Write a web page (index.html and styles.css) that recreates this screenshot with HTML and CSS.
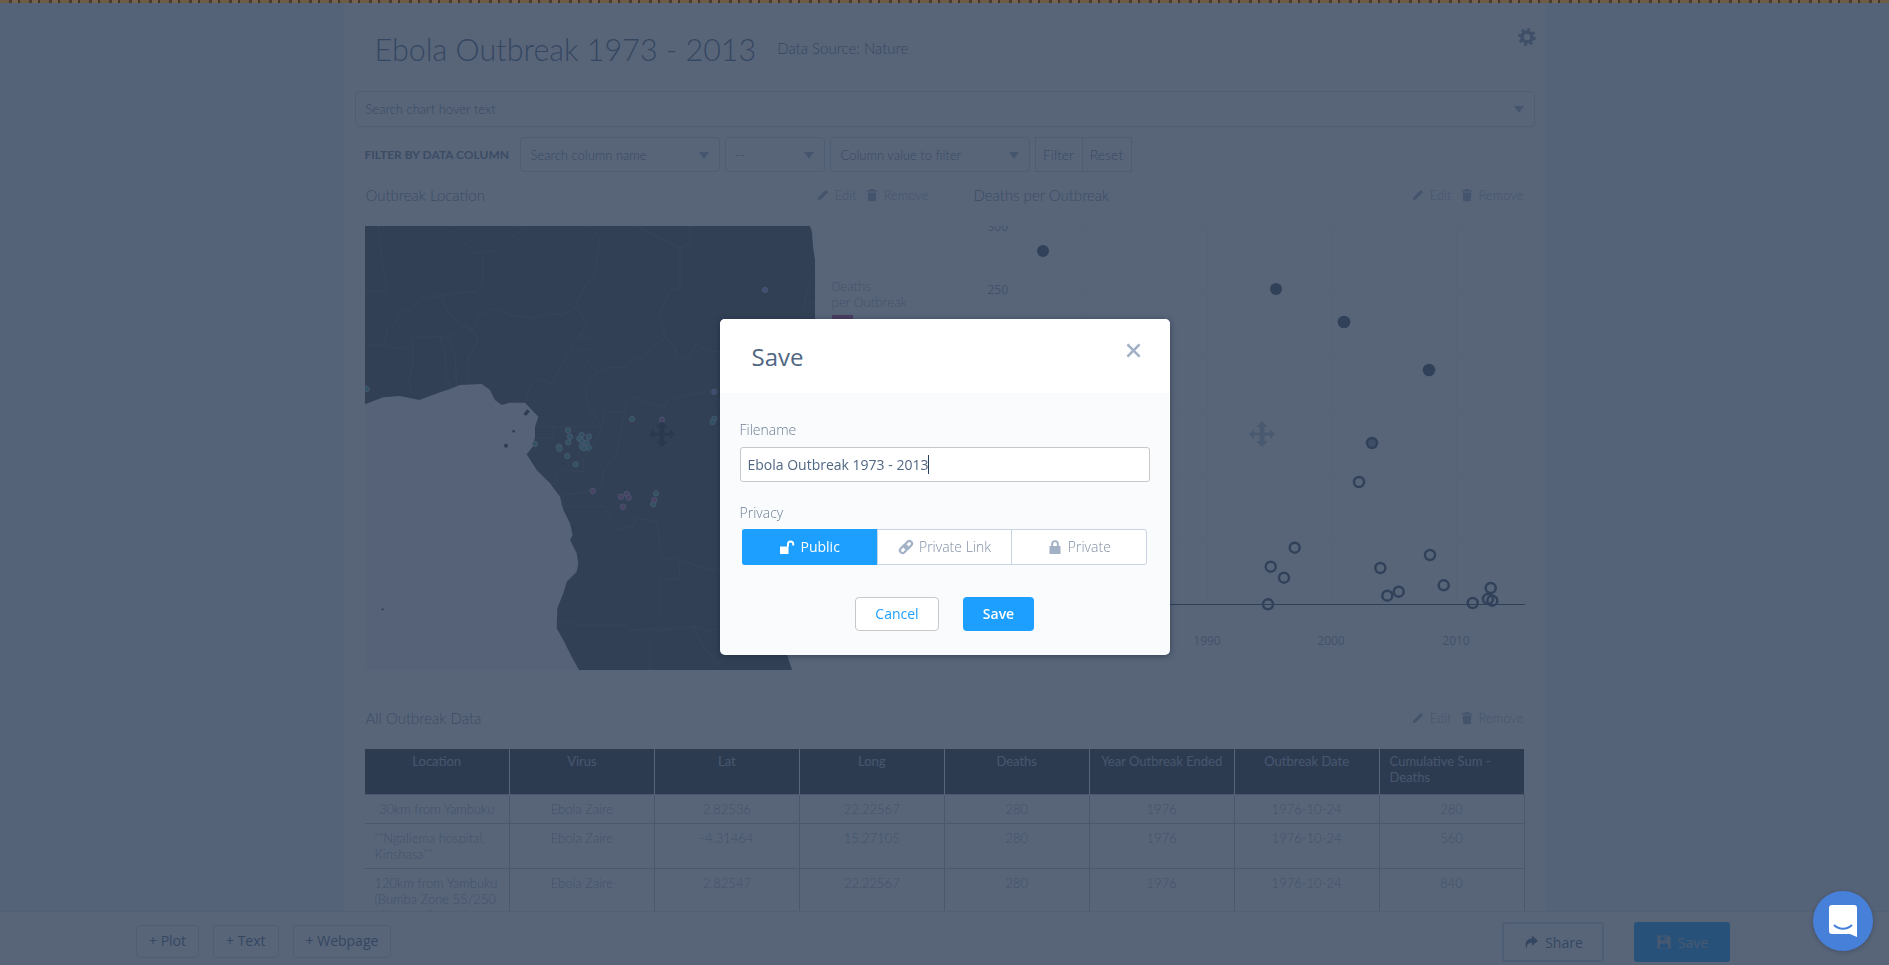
FILE: index.html
```html
<!DOCTYPE html>
<html lang="en">
<head>
  <meta charset="UTF-8">
  <title>Ebola Outbreak 1973 - 2013</title>
  <link rel="stylesheet" href="styles.css">
</head>
<body>
  <div class="top-strip"></div>

  <main class="page">
    <div class="panel">
      <header class="report-head">
        <div class="title-group">
          <h1>Ebola Outbreak 1973 - 2013</h1>
          <span class="source">Data Source: Nature</span>
        </div>
        <svg class="gear" viewBox="0 0 20 20"><circle cx="10" cy="10" r="5" fill="none" stroke="#7f8fa4" stroke-width="3.6"/><circle cx="10" cy="10" r="7.6" fill="none" stroke="#7f8fa4" stroke-width="2.6" stroke-dasharray="3 2.97"/></svg>
      </header>

      <div class="select search-box"><span>Search chart hover text</span><i class="caret"></i></div>

      <div class="dashboard">
        <div class="filter-row">
          <strong class="filter-label">FILTER BY DATA COLUMN</strong>
          <div class="select col-name"><span>Search column name</span><i class="caret"></i></div>
          <div class="select col-op"><span>--</span><i class="caret"></i></div>
          <div class="select col-value"><span>Column value to filter</span><i class="caret"></i></div>
          <div class="btn-pair"><span>Filter</span><span>Reset</span></div>
        </div>

        <div class="charts">
          <section class="card">
            <div class="card-head">
              <h3>Outbreak Location</h3>
              <div class="card-actions">
                <a><svg viewBox="0 0 16 16"><path d="M2 14l.8-3.5L10.5 2.8a1 1 0 0 1 1.4 0l1.3 1.3a1 1 0 0 1 0 1.4L5.5 13.2z"/></svg>Edit</a>
                <a><svg viewBox="0 0 16 16"><path d="M6 1h4l.5 1.5H14V4H2V2.5h3.5zM3 5h10l-.7 10H3.7z"/></svg>Remove</a>
              </div>
            </div>
            <div class="map-wrap">
              <svg class="map" viewBox="45 18 1350 1332">
                <path class="land" d="M45 18H1380L1386 36 1389 80 1395 120V900L1310 1300 1326 1350H45z"/>
                <path class="ocean" d="M45 553L100 532 150 528 208 540 270 517 300 507 330 495 395 492 420 510 435 540 455 555 480 548 525 548 565 590 555 620 555 650 548 680 530 703 560 750 600 790 630 830 640 870 660 910 668 945 660 960 680 1000 685 1030 680 1055 650 1085 640 1120 622 1165 620 1225 640 1260 665 1310 687 1350H45z"/>
                <g class="borders">
                  <path d="M85 18L100 150 108 185V213H45"/>
                  <path d="M280 18L330 60 365 85 368 102 440 90 490 50 530 18"/>
                  <path d="M398 97V190L380 215 320 218 275 230 240 226 210 240 185 265 150 280 135 310 110 330 105 370 85 375 60 375 45 370"/>
                  <path d="M275 230L290 270 320 300 335 315 370 330"/>
                  <path d="M185 352L265 350 295 352 320 340 345 312 375 340 385 365 355 410 352 490"/>
                  <path d="M185 352L190 400V430L175 480 185 520"/>
                  <path d="M270 350L285 400 290 470 305 505"/>
                  <path d="M295 352L315 400 320 490"/>
                  <path d="M105 372L130 385H170L190 410"/>
                  <path d="M378 320L385 285 430 265 480 285 545 295 590 280 640 285 675 265 700 290 710 320 690 350 720 355 740 380 690 395 740 455 770 445 830 440 840 420 880 410 945 352 975 380 980 420H1010L1040 370 1075 395H1110"/>
                  <path d="M720 18L750 60 735 160 690 220 675 265"/>
                  <path d="M860 18L990 85 1020 70V18"/>
                  <path d="M990 85V205L960 210 930 280 945 352"/>
                  <path d="M690 340L640 430 605 490 575 475 540 500 525 548"/>
                  <path d="M740 455L705 505 715 560 755 620 765 575H825L830 545 860 530 890 550 945 560 955 540 1020 525 1075 510 1110 545"/>
                  <path d="M755 620L680 620 555 620M610 620V655H555"/>
                  <path d="M755 630L700 720V755L640 750 615 760 625 790 600 790"/>
                  <path d="M825 580L810 640 800 700 760 750 755 800 730 810 680 820 640 825 635 858"/>
                  <path d="M640 860H765L780 900 800 930 850 920 860 895 920 905 930 980 940 1018 990 1015 1040 1040 1080 1045 1110 1055"/>
                  <path d="M990 1015L988 1078H930V1185L975 1225 1030 1220 1060 1280 1100 1320 1110 1340"/>
                  <path d="M620 1210L660 1205 690 1215H820L840 1230 970 1225 900 1240V1350"/>
                  <path d="M1110 1225L1075 1235 1030 1220"/>
                  <path d="M1395 159L1386 165 1365 240 1356 294M1365 245L1395 250"/>
                </g>
                <g class="islands">
                  <rect x="521" y="573" width="18" height="10" transform="rotate(-50 530 578)"/>
                  <circle cx="491" cy="634" r="4"/>
                  <circle cx="468" cy="677" r="6"/>
                  <circle cx="98" cy="1168" r="3"/>
                </g>
                <g class="dots teal">
                  <circle cx="50" cy="507" r="8"/><circle cx="555" cy="672" r="8"/><circle cx="654" cy="631" r="8"/><circle cx="660" cy="650" r="8"/><circle cx="655" cy="667" r="8"/><circle cx="627" cy="680" r="8"/><circle cx="628" cy="687" r="8"/><circle cx="652" cy="708" r="8"/><circle cx="677" cy="733" r="8"/><circle cx="695" cy="645" r="8"/><circle cx="688" cy="656" r="8"/><circle cx="695" cy="663" r="8"/><circle cx="717" cy="650" r="8"/><circle cx="710" cy="668" r="8"/><circle cx="716" cy="683" r="8"/><circle cx="695" cy="680" r="8"/><circle cx="702" cy="685" r="8"/><circle cx="846" cy="597" r="8"/><circle cx="918" cy="820" r="8"/><circle cx="910" cy="853" r="8"/><circle cx="1093" cy="596" r="8"/><circle cx="1088" cy="606" r="8"/>
                </g>
                <g class="dots purple">
                  <circle cx="936" cy="599" r="8"/><circle cx="728" cy="813" r="8"/><circle cx="813" cy="830" r="8"/><circle cx="830" cy="822" r="8"/><circle cx="836" cy="833" r="8"/><circle cx="819" cy="860" r="8"/><circle cx="913" cy="840" r="8"/>
                </g>
                <g class="dots blue">
                  <circle cx="1093" cy="515" r="8"/><circle cx="1245" cy="210" r="8"/>
                </g>
                <path class="move-dark" transform="translate(936 643) scale(3)" d="M-13 0l5-5v3.5h5.5V-7H-6l6-6 6 6H2.5v5.5H8V-5l5 5-5 5V1.5H2.5V7H6l-6 6-6-6h3.5V1.5H-8V5z"/>
              </svg>
              <div class="legend">
                <div>Deaths<br>per Outbreak</div>
                <div class="colorbar"></div>
              </div>
            </div>
          </section>

          <section class="card">
            <div class="card-head">
              <h3>Deaths per Outbreak</h3>
              <div class="card-actions">
                <a><svg viewBox="0 0 16 16"><path d="M2 14l.8-3.5L10.5 2.8a1 1 0 0 1 1.4 0l1.3 1.3a1 1 0 0 1 0 1.4L5.5 13.2z"/></svg>Edit</a>
                <a><svg viewBox="0 0 16 16"><path d="M6 1h4l.5 1.5H14V4H2V2.5h3.5zM3 5h10l-.7 10H3.7z"/></svg>Remove</a>
              </div>
            </div>
            <svg class="scatter" viewBox="973 226 552 444">
              <g class="grid">
                <path d="M1012 226.5H1525M1012 289.5H1525M1012 352.5H1525M1012 415.5H1525M1012 478.5H1525M1012 541.5H1525"/>
                <path d="M1083 226V604M1207.5 226V604M1331.5 226V604M1456.5 226V604"/>
              </g>
              <path class="zero" d="M1012 604.5H1525"/>
              <g class="ticks">
                <text x="1008" y="231" text-anchor="end">300</text>
                <text x="1008" y="294" text-anchor="end">250</text>
                <text x="1207" y="645" text-anchor="middle">1990</text>
                <text x="1331" y="645" text-anchor="middle">2000</text>
                <text x="1456" y="645" text-anchor="middle">2010</text>
              </g>
              <g class="filled">
                <circle cx="1043" cy="251" r="6"/><circle cx="1276" cy="289" r="6"/><circle cx="1344" cy="322" r="6.3"/><circle cx="1429" cy="370" r="6.3"/>
              </g>
              <g class="open">
                <circle class="half" cx="1372" cy="443" r="5"/>
                <circle cx="1359" cy="482" r="5"/><circle cx="1294.7" cy="547.7" r="5"/><circle cx="1270.7" cy="566.7" r="5"/><circle cx="1284" cy="577.7" r="5"/><circle cx="1268" cy="604.3" r="5"/><circle cx="1380.3" cy="568" r="5"/><circle cx="1430" cy="555" r="5"/><circle cx="1398.7" cy="591.7" r="5"/><circle cx="1387.3" cy="595.7" r="5"/><circle cx="1443.7" cy="585.3" r="5"/><circle cx="1472.7" cy="603" r="5"/><circle cx="1490.7" cy="588" r="5"/><circle cx="1488" cy="599" r="5"/><circle cx="1492.3" cy="600.7" r="5"/>
              </g>
              <path class="move-light" transform="translate(1262 434)" d="M-13 0l5-5v3.5h5.5V-7H-6l6-6 6 6H2.5v5.5H8V-5l5 5-5 5V1.5H2.5V7H6l-6 6-6-6h3.5V1.5H-8V5z"/>
            </svg>
          </section>
        </div>

        <section class="card table-card">
          <div class="card-head">
            <h3>All Outbreak Data</h3>
            <div class="card-actions">
              <a><svg viewBox="0 0 16 16"><path d="M2 14l.8-3.5L10.5 2.8a1 1 0 0 1 1.4 0l1.3 1.3a1 1 0 0 1 0 1.4L5.5 13.2z"/></svg>Edit</a>
              <a><svg viewBox="0 0 16 16"><path d="M6 1h4l.5 1.5H14V4H2V2.5h3.5zM3 5h10l-.7 10H3.7z"/></svg>Remove</a>
            </div>
          </div>
          <table class="data-table">
            <thead>
              <tr>
                <th><span>Location</span></th>
                <th><span>Virus</span></th>
                <th><span>Lat</span></th>
                <th><span>Long</span></th>
                <th><span>Deaths</span></th>
                <th><span>Year Outbreak Ended</span></th>
                <th><span>Outbreak Date</span></th>
                <th><span>Cumulative Sum - Deaths</span></th>
              </tr>
            </thead>
            <tbody>
              <tr>
                <td><span>30km from Yambuku</span></td>
                <td><span>Ebola Zaire</span></td>
                <td><span>2.82536</span></td>
                <td><span>22.22567</span></td>
                <td><span>280</span></td>
                <td><span>1976</span></td>
                <td><span>1976-10-24</span></td>
                <td><span>280</span></td>
              </tr>
              <tr>
                <td><span>""Ngaliema hospital, Kinshasa""</span></td>
                <td><span>Ebola Zaire</span></td>
                <td><span>-4.31464</span></td>
                <td><span>15.27105</span></td>
                <td><span>280</span></td>
                <td><span>1976</span></td>
                <td><span>1976-10-24</span></td>
                <td><span>560</span></td>
              </tr>
              <tr>
                <td><span>120km from Yambuku (Bumba Zone 55/250 villages affected)</span></td>
                <td><span>Ebola Zaire</span></td>
                <td><span>2.82547</span></td>
                <td><span>22.22567</span></td>
                <td><span>280</span></td>
                <td><span>1976</span></td>
                <td><span>1976-10-24</span></td>
                <td><span>840</span></td>
              </tr>
            </tbody>
          </table>
        </section>
      </div>
    </div>
  </main>

  <footer class="bottom-bar">
    <div class="add-group">
      <button class="ghost">+ Plot</button>
      <button class="ghost">+ Text</button>
      <button class="ghost">+ Webpage</button>
    </div>
    <div class="publish-group">
      <button class="share">
        <svg viewBox="0 0 16 16"><path d="M9 1.5l6 5.2-6 5.2V8.8C5.5 8.8 3.5 10.5 3.8 15 1 10.5 3 4.8 9 4.6z"/></svg>Share
      </button>
      <button class="save">
        <svg viewBox="0 0 16 16"><path fill-rule="evenodd" d="M1.5 1.5h11l2 2v11h-13zM4.5 2.5v4h6.5v-4zM8.6 3h1.6v3H8.6zM4 9.5v4.5h8V9.5z"/></svg>Save
      </button>
    </div>
  </footer>

  <div class="overlay">
    <div class="modal">
      <div class="modal-head">
        <h2>Save</h2>
        <svg class="close" viewBox="0 0 16 16"><path d="M1.5 1.5l13 13M14.5 1.5l-13 13"/></svg>
      </div>
      <div class="modal-body">
        <label class="field-label">Filename</label>
        <div class="text-input">Ebola Outbreak 1973 - 2013<i class="text-caret"></i></div>
        <label class="field-label privacy-label">Privacy</label>
        <div class="privacy">
          <div class="option active">
            <svg viewBox="0 0 16 16"><path d="M1 7.5h8.5V15H1zM8 7.5V5a3.6 3.6 0 0 1 7.2 0v1.5h-2V5a1.6 1.6 0 0 0-3.2 0v2.5z"/></svg>Public
          </div>
          <div class="option">
            <svg viewBox="0 0 16 16"><g transform="rotate(-45 8 8)" fill="none" stroke-width="2.2"><rect x="0.6" y="5.4" width="8.6" height="5.2" rx="2.6"/><rect x="6.8" y="5.4" width="8.6" height="5.2" rx="2.6"/></g></svg>Private Link
          </div>
          <div class="option">
            <svg viewBox="0 0 16 16"><path d="M2.5 7h11v8h-11zM4.2 7V5a3.8 3.8 0 0 1 7.6 0v2H9.9V5a1.9 1.9 0 0 0-3.8 0v2z"/></svg>Private
          </div>
        </div>
        <div class="modal-actions">
          <button class="btn-cancel">Cancel</button>
          <button class="btn-save">Save</button>
        </div>
      </div>
    </div>
  </div>

  <div class="chat-bubble">
    <svg viewBox="0 0 30 34"><path d="M4 1h22a3 3 0 0 1 3 3v29l-7-3H4a3 3 0 0 1-3-3V4a3 3 0 0 1 3-3z" fill="#fff"/><path d="M6 21c5 5 13 5 18 0" fill="none" stroke="#4680d9" stroke-width="2"/></svg>
  </div>
</body>
</html>
```

FILE: styles.css
```css
* {
  box-sizing: border-box;
}

html, body {
  height: 100%;
}

body {
  margin: 0;
  display: flex;
  flex-direction: column;
  height: 100vh;
  overflow: hidden;
  background-color: #f0f3f7;
  font-family: "Open Sans", sans-serif;
  color: #506784;
}

.top-strip {
  position: relative;
  z-index: 3;
  flex: none;
  height: 3px;
  background: repeating-linear-gradient(90deg, #6f5c47 0 9px, #4a3c2c 9px 12px, #766350 12px 18px, #433627 18px 20px);
}

.page {
  flex: 1;
  min-height: 0;
  overflow: hidden;
}

.panel {
  width: 1202px;
  margin: 0 auto;
  padding: 0 11px;
  background-color: #fff;
  min-height: 100%;
}

.report-head {
  display: flex;
  height: 88px;
  padding: 21px 0 0 20px;
}

.title-group {
  display: flex;
  align-items: center;
  height: 50px;
}

.report-head h1 {
  margin: 0;
  font-family: Lato, sans-serif;
  font-size: 30.5px;
  font-weight: 300;
  line-height: 50px;
  color: #506784;
}

.source {
  margin: 0 0 2px 21px;
  font-family: Lato, sans-serif;
  font-size: 15px;
  font-weight: 300;
  color: #506784;
}

.gear {
  width: 20px;
  height: 20px;
  margin: 3px -2px 0 auto;
}

.select {
  position: relative;
  display: flex;
  align-items: center;
  height: 35px;
  padding: 0 10px;
  border: 1px solid #c8d4e3;
  border-radius: 4px;
  font-family: Lato, sans-serif;
  font-size: 13px;
  font-weight: 300;
  color: #5f7390;
}

.search-box {
  height: 36px;
}

.caret {
  position: absolute;
  right: 10px;
  top: 14px;
  width: 0;
  height: 0;
  border: 5px solid transparent;
  border-top: 7px solid #a2b1c6;
  border-bottom: 0;
}

.dashboard {
  padding: 0 10px;
}

.filter-row {
  display: flex;
  margin-top: 10px;
  height: 35px;
  align-items: center;
}

.filter-label {
  width: 155px;
  font-family: Lato, sans-serif;
  font-size: 12px;
  font-weight: 700;
  color: #6f8098;
}

.col-name {
  width: 200px;
}

.col-op {
  width: 100px;
  margin-left: 5px;
}

.col-value {
  width: 200px;
  margin-left: 5px;
}

.btn-pair {
  display: flex;
  height: 35px;
  margin-left: 5px;
  border: 1px solid #c8d4e3;
  font-family: Lato, sans-serif;
  font-size: 14px;
  font-weight: 300;
  color: #5f7390;
}

.btn-pair span {
  display: flex;
  align-items: center;
  justify-content: center;
  width: 46px;
}

.btn-pair span + span {
  width: 49px;
  border-left: 1px solid #c8d4e3;
}

.charts {
  display: grid;
  grid-template-columns: 565px 1fr;
  column-gap: 43px;
  margin-top: 8px;
}

.card-head {
  display: flex;
  align-items: center;
  justify-content: space-between;
  height: 30px;
  margin-bottom: 16px;
  padding: 0 1px 0 1px;
}

.card-head h3 {
  margin: 0;
  font-family: Lato, sans-serif;
  font-size: 15px;
  font-weight: 300;
  color: #6f8098;
}

.card-actions {
  display: flex;
  gap: 8px;
  font-family: Lato, sans-serif;
  font-size: 13px;
  font-weight: 300;
  color: #98a8bd;
}

.card-actions a {
  display: flex;
  align-items: center;
  gap: 5px;
}

.card-actions svg {
  width: 14px;
  height: 14px;
  fill: #98a8bd;
}

.map-wrap {
  display: flex;
}

.map {
  width: 450px;
  height: 444px;
  flex: none;
}

.land {
  fill: #434950;
}

.ocean {
  fill: #eef1f4;
}

.borders path {
  fill: none;
  stroke: #565f69;
  stroke-width: 2.5;
}

.islands {
  fill: #2f3845;
}

.dots circle {
  stroke: #b4c0c8;
  stroke-width: 2.5;
}

.teal circle {
  fill: #3f9a9a;
}

.purple circle {
  fill: #b04a90;
}

.blue circle {
  fill: #8a86d8;
}

.move-dark {
  fill: #21272f;
}

.legend {
  padding: 53px 0 0 17px;
  font-size: 12.5px;
  font-weight: 300;
  line-height: 16px;
  color: #8fa0b5;
}

.colorbar {
  width: 21px;
  height: 120px;
  margin-top: 4px;
  background: linear-gradient(#b83a88, #7f8fd8);
}

.scatter {
  display: block;
  width: 552px;
  height: 444px;
}

.grid path {
  fill: none;
  stroke: #f0f3f6;
  stroke-width: 1;
}

.zero {
  fill: none;
  stroke: #354458;
  stroke-width: 1;
}

.ticks text {
  font-family: "Open Sans", sans-serif;
  font-size: 12px;
  fill: #8d9bad;
}

.filled circle {
  fill: #3a4a60;
}

.open circle {
  fill: none;
  stroke: #3a4a60;
  stroke-width: 2.5;
}

.open .half {
  fill: #7f8c9e;
}

.move-light {
  fill: #b6c2d2;
}

.table-card {
  margin-top: 33px;
}

.data-table {
  width: 1160px;
  table-layout: fixed;
  border-collapse: collapse;
  font-family: Lato, sans-serif;
}

.data-table th {
  height: 45px;
  padding: 4px 10px;
  vertical-align: top;
  background-color: #2a2f38;
  border-left: 1px solid #fff;
  font-size: 13px;
  font-weight: 400;
  line-height: 16px;
  color: #a8b6c8;
}

.data-table th:first-child {
  border-left: 0;
}

.data-table td {
  padding: 6px 10px;
  vertical-align: top;
  border: 1px solid #b4bfcc;
  font-size: 13px;
  font-weight: 300;
  line-height: 16px;
  text-align: center;
  color: #8d9cb0;
}

.data-table td:first-child {
  border-left: 0;
}

.data-table th span,
.data-table td span {
  display: inline-block;
  text-align: left;
}

.bottom-bar {
  flex: none;
  display: flex;
  justify-content: space-between;
  height: 54px;
  padding: 0 159px 0 136px;
  background-color: #fff;
  border-top: 1px solid #dfe4ea;
}

.add-group {
  display: flex;
  gap: 14px;
  padding-top: 13px;
}

.ghost {
  height: 33px;
  padding: 0 12px 2px;
  background-color: #fff;
  border: 1px solid #c8d4e3;
  border-radius: 4px;
  font-family: "Open Sans", sans-serif;
  font-size: 14px;
  color: #506784;
}

.publish-group {
  display: flex;
  gap: 30px;
  padding-top: 10px;
}

.share,
.save {
  display: flex;
  align-items: center;
  justify-content: center;
  gap: 6px;
  height: 40px;
  border-radius: 3px;
  font-family: "Open Sans", sans-serif;
  font-size: 14px;
}

.share svg,
.save svg {
  width: 16px;
  height: 16px;
}

.share {
  width: 102px;
  background-color: #fff;
  border: 2px solid #c8d4e3;
  color: #506784;
}

.share svg {
  fill: #506784;
}

.save {
  width: 96px;
  background-color: #119dff;
  border: 0;
  color: #a8bfd0;
}

.save svg {
  fill: #a8bfd0;
}

.overlay {
  position: fixed;
  inset: 0;
  z-index: 2;
  display: flex;
  align-items: center;
  justify-content: center;
  padding-top: 9px;
  background-color: rgba(46, 62, 88, 0.8);
}

.modal {
  width: 450px;
  height: 336px;
  background-color: #f9fbfd;
  border-radius: 5px;
  box-shadow: 0 1px 6px rgba(20, 30, 50, 0.5);
  overflow: hidden;
}

.modal-head {
  position: relative;
  height: 74px;
  padding-left: 32px;
  background-color: #fff;
}

.modal-head h2 {
  margin: 0;
  font-size: 24px;
  font-weight: 400;
  line-height: 76px;
  color: #506784;
}

.close {
  position: absolute;
  top: 24px;
  right: 29px;
  width: 15px;
  height: 15px;
  fill: none;
  stroke: #a2b1c6;
  stroke-width: 2.8;
}

.modal-body {
  padding: 27px 20px 0;
}

.field-label {
  display: block;
  font-size: 14px;
  font-weight: 300;
  line-height: 20px;
  color: #6d7f97;
}

.text-input {
  display: flex;
  align-items: center;
  height: 35px;
  margin-top: 7px;
  padding: 0 7px;
  background-color: #fff;
  border: 1px solid #c8c8c8;
  border-radius: 3px;
  font-size: 14px;
  color: #506784;
}

.text-caret {
  width: 1px;
  height: 19px;
  background-color: #2a3f5f;
}

.privacy-label {
  margin-top: 21px;
}

.privacy {
  display: grid;
  grid-template-columns: repeat(3, 1fr);
  height: 36px;
  margin: 6px 3px 0 2px;
  border: 1px solid #c8d4e3;
  border-radius: 3px;
  background-color: #fff;
}

.option {
  display: flex;
  align-items: center;
  justify-content: center;
  gap: 5px;
  margin: -1px 0;
  padding-bottom: 1px;
  border-left: 1px solid #c8d4e3;
  border-top: 1px solid #c8d4e3;
  border-bottom: 1px solid #c8d4e3;
  font-size: 14px;
  font-weight: 300;
  color: #7f8fa4;
}

.option svg {
  width: 16px;
  height: 16px;
  fill: #a2b1c6;
  stroke: #a2b1c6;
  stroke-width: 0;
}

.option:nth-child(2) svg g {
  stroke-width: 2.2;
}

.option.active {
  margin-left: -1px;
  background-color: #1d9fff;
  border-color: #1d9fff;
  border-radius: 3px 0 0 3px;
  font-weight: 400;
  color: #fff;
}

.option.active svg {
  fill: #fff;
}

.modal-actions {
  display: flex;
  justify-content: center;
  gap: 24px;
  margin-top: 32px;
}

.btn-cancel,
.btn-save {
  height: 34px;
  padding-bottom: 2px;
  border-radius: 4px;
  font-family: "Open Sans", sans-serif;
  font-size: 14px;
}

.btn-cancel {
  width: 84px;
  background-color: #fff;
  border: 1px solid #c8c8c8;
  color: #1d9fff;
}

.btn-save {
  width: 71px;
  background-color: #1d9fff;
  border: 0;
  font-weight: 600;
  color: #fff;
}

.chat-bubble {
  position: fixed;
  z-index: 3;
  right: 16px;
  bottom: 14px;
  display: flex;
  align-items: center;
  justify-content: center;
  width: 60px;
  height: 60px;
  background-color: #4680d9;
  border-radius: 50%;
  box-shadow: 0 1px 4px rgba(20, 30, 50, 0.3);
}

.chat-bubble svg {
  width: 30px;
  height: 34px;
}
```
